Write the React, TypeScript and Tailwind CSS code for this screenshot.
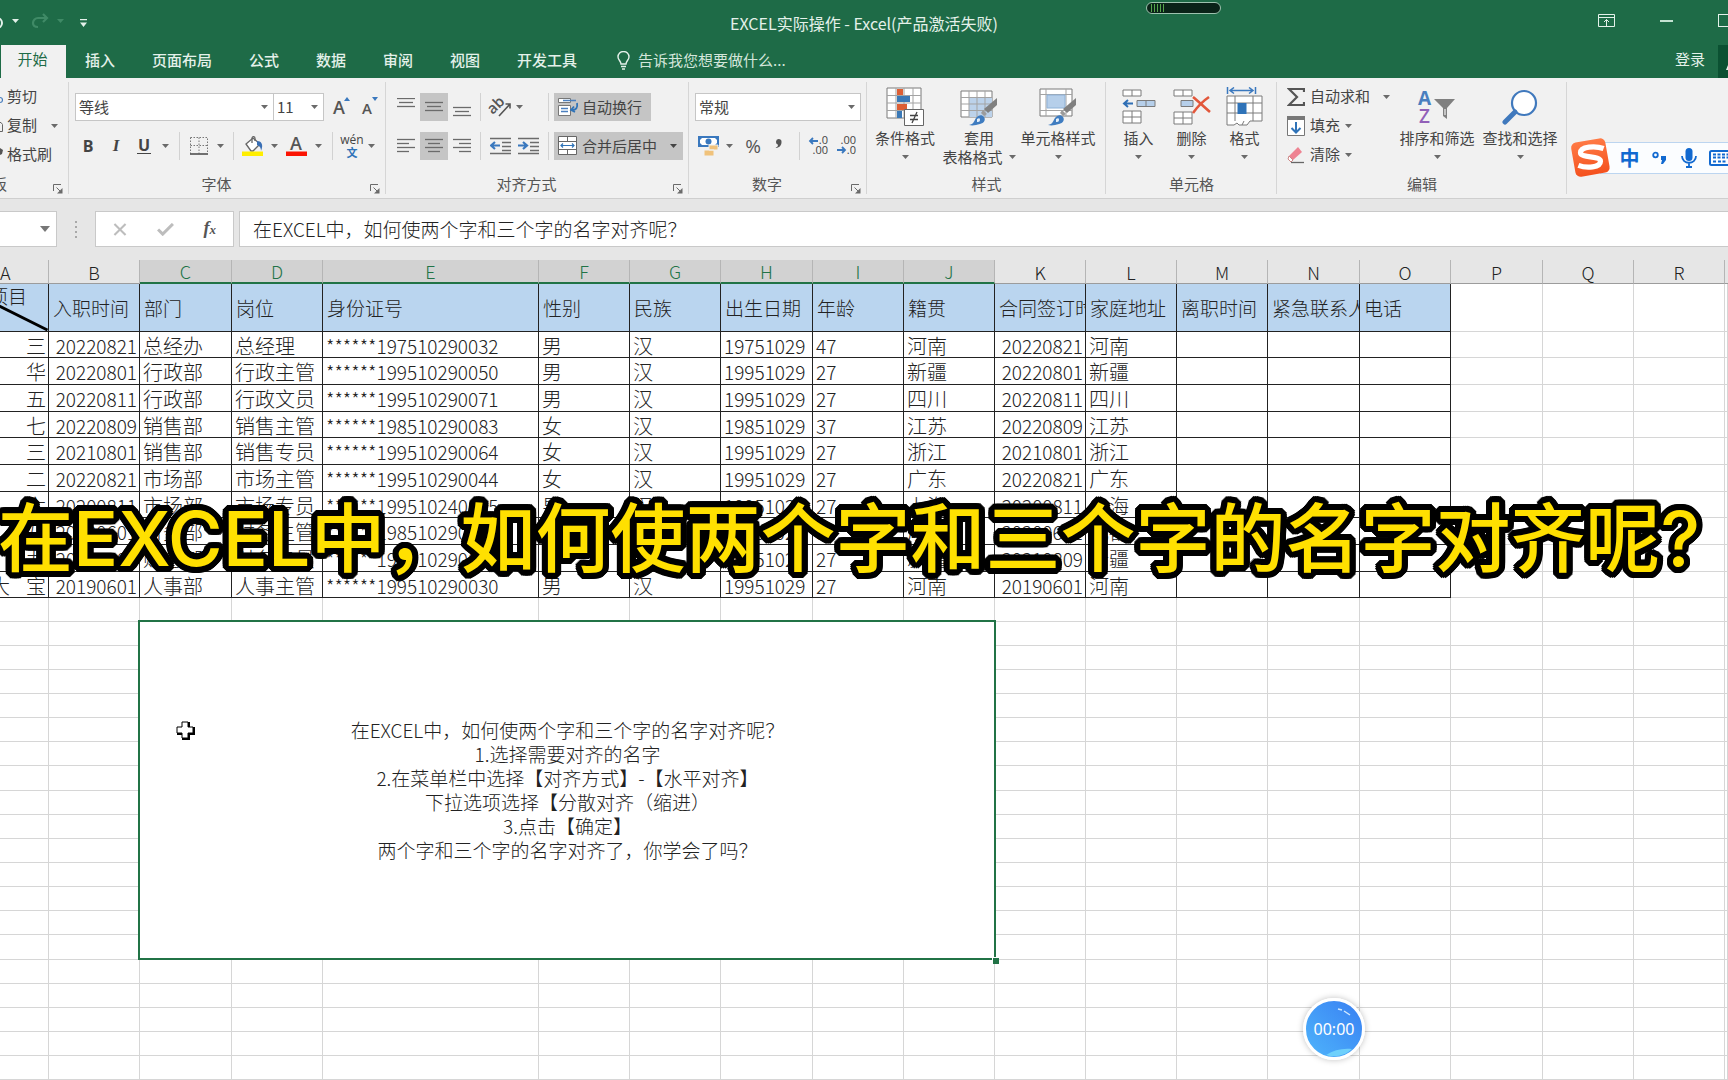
import React from "react";

const CJK = "font-['Noto_Sans_CJK_SC',sans-serif]";

/* ---------- small shared pieces ---------- */

function Caret({ className = "text-[#6a6a6a]" }: { className?: string }) {
  return (
    <svg width="7" height="4" viewBox="0 0 7 4" className={`shrink-0 ${className}`} aria-hidden="true">
      <path d="M0 0h7L3.5 4z" fill="currentColor" />
    </svg>
  );
}

function Divider() {
  return <span className="h-7 w-px shrink-0 bg-[#d2d2d2]" />;
}

function IconButton({
  label,
  className = "w-7",
  active = false,
  children,
}: {
  label: string;
  className?: string;
  active?: boolean;
  children: React.ReactNode;
}) {
  return (
    <button
      type="button"
      aria-label={label}
      className={`flex h-7 shrink-0 items-center justify-center ${className} ${active ? "bg-[#c5c5c5]" : ""}`}
    >
      {children}
    </button>
  );
}

function Group({
  title,
  className,
  titleClass = "text-center",
  launcher = false,
  children,
}: {
  title: string;
  className: string;
  titleClass?: string;
  launcher?: boolean;
  children: React.ReactNode;
}) {
  return (
    <section
      aria-label={title}
      className={`relative flex shrink-0 flex-col justify-between after:absolute after:top-1 after:right-0 after:bottom-1 after:w-px after:bg-[#d6d6d6] ${className}`}
    >
      {children}
      <div className={`pb-1 text-[15px] leading-5 whitespace-nowrap text-[#555] ${titleClass}`}>{title}</div>
      {launcher && (
        <button type="button" aria-label={`${title}设置`} className="absolute right-1.5 bottom-1">
          <svg width="10" height="10" viewBox="0 0 10 10" fill="none" stroke="#6a6a6a" aria-hidden="true">
            <path d="M.5 7V.5H8M3.5 3.5l4 4" />
            <path d="M9.5 4v5.5H4z" fill="#6a6a6a" stroke="none" />
          </svg>
        </button>
      )}
    </section>
  );
}

function BigButton({ lines, className, children }: { lines: string[]; className: string; children: React.ReactNode }) {
  return (
    <button type="button" className={`flex shrink-0 flex-col items-center whitespace-nowrap text-[15px] leading-[19px] text-[#444] ${className}`}>
      <span className="flex h-[42px] items-center">{children}</span>
      <span>{lines[0]}</span>
      <span className="flex h-[19px] items-center gap-1.5">
        {lines[1]}
        <Caret />
      </span>
    </button>
  );
}

/* ---------- alignment glyphs ---------- */

function Lines({ rows, h = 18 }: { rows: [number, number, number][]; h?: number }) {
  return (
    <svg width="18" height={h} viewBox={`0 0 18 ${h}`} stroke="#6b6b6b" strokeWidth="1.3" aria-hidden="true">
      {rows.map(([y, a, b]) => (
        <path key={y} d={`M${a} ${y}.5H${b}`} />
      ))}
    </svg>
  );
}

function IndentIcon({ flip = false }: { flip?: boolean }) {
  return (
    <svg width="22" height="18" viewBox="0 0 22 18" fill="none" stroke="#6b6b6b" strokeWidth="1.3" aria-hidden="true">
      <path d="M0 1.5h21M12 5.5h9M12 9.5h9M12 13.5h9M0 16.5h21" />
      <path
        d={flip ? "M0 8.5h8M5 5l4 3.500-4 3.500" : "M10 8.500H2M5 5L1 8.500 5 12"}
        stroke="#3a78be"
        strokeWidth="2.2"
      />
    </svg>
  );
}

/* ---------- ribbon pictures ---------- */

function BrushOverlay() {
  return (
    <g>
      <path d="M37 10v7L28 25l-4-4z" fill="#808080" />
      <path d="M23 22l4 4-3 2-3-3z" fill="#9b9b9b" />
      <path d="M9 37c5-1 5-4 7-7s6-4 8-1 0 6-4 7-7 2-11 1z" fill="#3f7cc0" />
      <path d="M17 31c2-1 3-1 3 1s-2 2-3 2z" fill="#e5f0fb" />
    </g>
  );
}

function CondFormatIcon() {
  return (
    <svg width="38" height="40" viewBox="0 0 38 40" aria-hidden="true">
      <path d="M1 1h34v30H1z" fill="#fff" stroke="#7a7a7a" />
      <path d="M1 8.500h34M1 16h34M1 23.500h34M10 1v30M18 1v30M27 1v30" stroke="#a3a3a3" fill="none" />
      <path d="M11 2h6v6h-6zM11 17h10v6H11z" fill="#dd5f35" />
      <path d="M11 9h13v6H11zM11 24h5v7h-5z" fill="#3b79b7" />
      <path d="M18.500 22.500h19v16h-19z" fill="#fff" stroke="#666" />
      <path d="M24 28.500h8M24 32.500h8M31 25l-5 11" stroke="#444" strokeWidth="1.3" />
    </svg>
  );
}

function TableFormatIcon() {
  return (
    <svg width="38" height="38" viewBox="0 0 38 38" aria-hidden="true">
      <path d="M1 3h31v26H1z" fill="#fff" stroke="#7a7a7a" />
      <path d="M9 10h23v19H9z" fill="#bcd2ea" />
      <path d="M1 9.500h31M1 16h31M1 22.500h31M9 3v26M17 3v26M25 3v26" stroke="#a3a3a3" fill="none" />
      <BrushOverlay />
    </svg>
  );
}

function CellStyleIcon() {
  return (
    <svg width="38" height="38" viewBox="0 0 38 38" aria-hidden="true">
      <path d="M1 1h32v27H1z" fill="#fff" stroke="#7a7a7a" />
      <path d="M1 6.500h32M1 22.500h32M7 1v27M27 1v27" stroke="#a3a3a3" fill="none" />
      <path d="M8 7h18v13H8z" fill="#b6cfea" stroke="#8fb2d8" />
      <BrushOverlay />
    </svg>
  );
}

function InsertCellsIcon() {
  return (
    <svg width="34" height="36" viewBox="0 0 34 36" fill="#fff" stroke="#7a7a7a" aria-hidden="true">
      <path d="M1 1h18v6H1zM10 1v6M1 22h18v12H1zM10 22v12M1 28h18" />
      <path d="M15 11.500h18v6H15zM24 11.500v6" fill="#b6cfea" />
      <path d="M11 14.500H3M6 11l-4 3.500L6 18" fill="none" stroke="#2f6fb5" strokeWidth="2" />
    </svg>
  );
}

function DeleteCellsIcon() {
  return (
    <svg width="38" height="36" viewBox="0 0 38 36" fill="#fff" stroke="#7a7a7a" aria-hidden="true">
      <path d="M1 1h18v6H1zM10 1v6M1 23h18v12H1zM10 23v12M1 29h18" />
      <path d="M8 11.500h12v6H8z" fill="#b6cfea" />
      <path d="M20 8c5 4 10 9 17 15M36 8c-6 4-11 9-16 16" fill="none" stroke="#e2573b" strokeWidth="2.600" />
    </svg>
  );
}

function FormatCellsIcon() {
  return (
    <svg width="38" height="40" viewBox="0 0 38 40" fill="#fff" stroke="#7a7a7a" aria-hidden="true">
      <path d="M1 9h35v25H24l-3 4H13l-2-2-3 2H1z" />
      <path d="M1 16h35M1 26h35M9 9v25M27 9v25M18 34l-2 4" />
      <path d="M11.500 16h9v11h-9z" fill="#2f73b8" stroke="none" />
      <path d="M1.500 0v7M29.500 0v7M4 3.500h23M8 .5L4 3.500l4 3M23 .5l4 3-4 3" fill="none" stroke="#3a78be" strokeWidth="1.500" />
    </svg>
  );
}

function SortFilterIcon() {
  return (
    <svg width="38" height="36" viewBox="0 0 38 36" className="overflow-visible" aria-hidden="true">
      <text x="0" y="16" fontSize="19" fontWeight="700" fill="#4a7fbf" fontFamily="Open Sans, sans-serif">A</text>
      <text x="1" y="34" fontSize="19" fontWeight="600" fill="#9160b8" fontFamily="Open Sans, sans-serif">Z</text>
      <path d="M16 10h21l-8 9v11l-4-3v-8z" fill="#808080" />
      <path d="M27 20v6" stroke="#ddd" strokeWidth="1.500" />
    </svg>
  );
}

function FindIcon() {
  return (
    <svg width="36" height="36" viewBox="0 0 36 36" aria-hidden="true">
      <circle cx="22" cy="14" r="12" fill="#fff" stroke="#4079bd" strokeWidth="2.200" />
      <path d="M13 23L3 33" stroke="#4079bd" strokeWidth="5" strokeLinecap="round" />
    </svg>
  );
}

/* ---------- title bar, tabs ---------- */

function TitleBar() {
  return (
    <header className="relative flex h-[45px] shrink-0 items-center justify-between bg-[#1e6b47] text-[#e4f1ea]">
      <div className="flex h-10 items-center pb-1">
        <button type="button" aria-label="撤消" className="flex w-3 justify-end overflow-hidden pr-2">
          <svg width="18" height="16" viewBox="0 0 18 16" fill="none" stroke="currentColor" strokeWidth="2" className="shrink-0" aria-hidden="true">
            <path d="M6 1L1 5l5 4M1 5h10a5 5 0 010 10H9" />
          </svg>
        </button>
        <Caret className="text-[#e4f1ea]" />
        <button type="button" aria-label="恢复" className="ml-3 flex items-center gap-2 text-[#3f8a66]">
          <svg width="18" height="16" viewBox="0 0 18 16" fill="none" stroke="currentColor" strokeWidth="2.200" aria-hidden="true">
            <path d="M12 1l4 4-4 4M16 5H7a5 5 0 00-5 5c0 3 2 4 5 4" />
          </svg>
          <Caret className="text-[#3f8a66]" />
        </button>
        <button type="button" aria-label="自定义快速访问工具栏" className="ml-4 pt-1">
          <svg width="7" height="8" viewBox="0 0 7 8" fill="currentColor" aria-hidden="true">
            <path d="M0 0h7v1.300H0zM0 3.500h7L3.500 8z" />
          </svg>
        </button>
      </div>
      <h1 className="absolute inset-x-0 top-3 text-center text-[16px] leading-[22px]">
        EXCEL实际操作 - Excel(产品激活失败)
      </h1>
      <div className="absolute top-0.5 left-[66.3%] flex h-3 w-[75px] items-center gap-0.5 rounded-md border border-[#9dc2ae] bg-[#0a2318] px-1">
        {[0, 1, 2, 3, 4].map((i) => (
          <span key={i} className="h-2 w-px bg-[#56a54c]" />
        ))}
      </div>
      <div className="flex h-[41px] items-center gap-[45px] overflow-hidden pb-1">
        <button type="button" aria-label="功能区显示选项">
          <svg width="17" height="13" viewBox="0 0 17 13" fill="none" stroke="currentColor" aria-hidden="true">
            <path d="M.5.5h16v12H.5zM.5 3.500h16M8.500 12V5.500M6 8l2.500-2.500L11 8" />
          </svg>
        </button>
        <button type="button" aria-label="最小化" className="h-0.5 w-[13px] bg-[#c4e2d2]" />
        <button type="button" aria-label="最大化" className="h-[13px] w-2.5 border border-r-0 border-[#e4f1ea]" />
      </div>
    </header>
  );
}

const TABS = ["插入", "页面布局", "公式", "数据", "审阅", "视图", "开发工具"];

function TabBar() {
  return (
    <nav className="flex h-[33px] shrink-0 items-center bg-[#1e6b47] text-[15px] text-[#e4f1ea]">
      <button type="button" className="ml-px h-full w-[65px] bg-[#f1f1f1] pr-0.5 pb-1 text-[#1e6b47]">开始</button>
      <div className="ml-[19px] flex gap-[37px] pb-1">
        {TABS.map((t) => (
          <button key={t} type="button" className="leading-5 font-medium whitespace-nowrap">
            {t}
          </button>
        ))}
      </div>
      <label className="ml-10 flex flex-1 items-center gap-2 pb-0.5">
        <svg width="13" height="19" viewBox="0 0 13 19" fill="none" stroke="currentColor" strokeWidth="1.400" aria-hidden="true">
          <path d="M4 13c0-3-3-4-3-7a5.500 5.500 0 0111 0c0 3-3 4-3 7zM4 15.500h5M5 18h3" />
        </svg>
        <input
          aria-label="告诉我您想要做什么"
          placeholder="告诉我您想要做什么..."
          className="w-60 bg-transparent text-[15px] outline-none placeholder:text-[#d3e6db]"
        />
      </label>
      <button type="button" className="mr-[13px] pb-1">登录</button>
      <button type="button" aria-label="共享" className="flex h-full w-2.5 items-center justify-end overflow-hidden bg-[#0b5132]">
        <svg width="3" height="16" viewBox="0 0 3 16" aria-hidden="true">
          <path d="M3 11L1 16h2z" fill="#e4f1ea" />
        </svg>
      </button>
    </nav>
  );
}

/* ---------- ribbon ---------- */

function ClipboardGroup() {
  return (
    <Group title="剪贴板" className="w-[69px] overflow-hidden" titleClass="flex w-[7px] justify-end" launcher>
      <div className="flex flex-col pt-1 text-[15px] text-[#444]">
        <button type="button" className="flex h-[29px] items-center gap-[4px] whitespace-nowrap">
          <svg width="3" height="16" viewBox="0 0 3 16" aria-hidden="true">
            <circle cx="0" cy="11" r="2.500" fill="none" stroke="#4a7fbf" strokeWidth="1.200" />
          </svg>
          剪切
        </button>
        <button type="button" className="flex h-[29px] items-center gap-[4px] whitespace-nowrap">
          <svg width="3" height="16" viewBox="0 0 3 16" fill="none" stroke="#666" aria-hidden="true">
            <path d="M0 4.500h1l1.500 2v7H0" />
          </svg>
          复制
          <span className="ml-2.5 flex">
            <Caret />
          </span>
        </button>
        <button type="button" className="flex h-[29px] items-center gap-[4px] whitespace-nowrap">
          <svg width="3" height="16" viewBox="0 0 3 16" aria-hidden="true">
            <path d="M0 1l3 2-1 4-2 1z" fill="#555" />
          </svg>
          格式刷
        </button>
      </div>
    </Group>
  );
}

function Dropdown({ label, value, className }: { label: string; value: string; className: string }) {
  return (
    <label className={`relative flex h-7 shrink-0 items-center border border-[#c6c6c6] bg-white ${className}`}>
      <select aria-label={label} defaultValue={value} className="h-full w-full appearance-none bg-transparent pl-[3px] text-[15px] text-[#444] outline-none">
        <option>{value}</option>
      </select>
      <span className="pointer-events-none absolute right-[5px] flex">
        <Caret />
      </span>
    </label>
  );
}

function FontGroup() {
  return (
    <Group title="字体" className="w-[317px]" titleClass="pr-[22px] text-center" launcher>
      <div className="flex flex-col gap-[11px] pt-[15px] pl-1.5 text-[#444]">
        <div className="flex items-center">
          <Dropdown label="字体" value="等线" className="w-[199px]" />
          <Dropdown label="字号" value="11" className="-ml-px w-[51px]" />
          <IconButton label="增大字号" className="ml-1.5 w-[22px]">
            <svg width="18" height="22" viewBox="0 0 18 22" className="overflow-visible" aria-hidden="true">
              <text x="1" y="18" fontSize="18" fontWeight="600" fill="#555" fontFamily="Open Sans, sans-serif">A</text>
              <path d="M12 5l3-4 3 4z" fill="#3a78be" />
            </svg>
          </IconButton>
          <IconButton label="减小字号" className="ml-1.5 w-[22px]">
            <svg width="17" height="22" viewBox="0 0 17 22" className="overflow-visible" aria-hidden="true">
              <text x="1" y="18" fontSize="15" fontWeight="600" fill="#555" fontFamily="Open Sans, sans-serif">A</text>
              <path d="M11 1h6l-3 4z" fill="#3a78be" />
            </svg>
          </IconButton>
        </div>
        <div className="flex items-center font-['Open_Sans',sans-serif] text-[16px]">
          <IconButton label="加粗" className="w-[26px]"><b>B</b></IconButton>
          <IconButton label="倾斜" className="w-[30px]">
            <i className="font-['Liberation_Serif',serif] text-[17px] font-bold">I</i>
          </IconButton>
          <IconButton label="下划线" className="w-[26px]">
            <b className="border-b border-[#444] px-px leading-[15px]">U</b>
          </IconButton>
          <IconButton label="下划线选项" className="w-4"><Caret /></IconButton>
          <span className="ml-1.5 flex"><Divider /></span>
          <IconButton label="边框" className="ml-1.5 w-[26px]">
            <svg width="18" height="18" viewBox="0 0 18 18" fill="none" stroke="#777" aria-hidden="true">
              <path d="M.5.5h17v16M.5.500v16M9 .5v16M.5 8.500h17" strokeDasharray="1.500 1.500" />
              <path d="M0 17h18" stroke="#444" strokeWidth="1.500" />
            </svg>
          </IconButton>
          <IconButton label="边框选项" className="w-4"><Caret /></IconButton>
          <span className="ml-[5px] flex"><Divider /></span>
          <IconButton label="填充颜色" className="ml-1.5 w-[26px]">
            <svg width="22" height="20" viewBox="0 0 22 20" aria-hidden="true">
              <path d="M4 8l7-6 7 6-7 7H9z" fill="#fff" stroke="#666" strokeWidth="1.300" />
              <path d="M10 7V2.500c0-2.500 3-2.500 3 0V5" fill="none" stroke="#666" strokeWidth="1.300" />
              <path d="M15 5c4 0 7 3 4 10 0-3-1-5-4-6z" fill="#3a6fb5" />
              <path d="M0 15.500h21v4.500H0z" fill="#ffee00" />
            </svg>
          </IconButton>
          <IconButton label="填充颜色选项" className="w-4"><Caret /></IconButton>
          <IconButton label="字体颜色" className="w-[28px]">
            <svg width="21" height="20" viewBox="0 0 21 20" className="overflow-visible" aria-hidden="true">
              <text x="4" y="14" fontSize="18" fontWeight="600" fill="#555" fontFamily="Open Sans, sans-serif">A</text>
              <path d="M0 15.500h21v4.500H0z" fill="#fb1403" />
            </svg>
          </IconButton>
          <IconButton label="字体颜色选项" className="w-4"><Caret /></IconButton>
          <span className="ml-1.5 flex"><Divider /></span>
          <button type="button" aria-label="拼音" className="ml-2 flex h-7 w-[22px] flex-col items-center justify-center">
            <span className="text-[12px] leading-[12px]">wén</span>
            <span className="font-['Noto_Sans_CJK_SC',sans-serif] text-[11px] leading-[12px] font-bold text-[#2f73b8]">文</span>
          </button>
          <IconButton label="拼音选项" className="w-4"><Caret /></IconButton>
        </div>
      </div>
    </Group>
  );
}

function AlignGroup() {
  return (
    <Group title="对齐方式" className="w-[303px]" titleClass="pr-[22px] text-center" launcher>
      <div className="flex flex-col gap-[11px] pt-[15px] pl-1.5 text-[15px] text-[#444]">
        <div className="flex items-center">
          <IconButton label="顶端对齐"><Lines rows={[[0, 0, 18], [4, 2, 16], [8, 0, 18]]} /></IconButton>
          <IconButton label="垂直居中" active><Lines rows={[[4, 0, 18], [8, 2, 16], [12, 0, 18]]} /></IconButton>
          <IconButton label="底端对齐"><Lines rows={[[10, 0, 18], [14, 2, 16], [18, 0, 18]]} h={20} /></IconButton>
          <span className="ml-1 flex"><Divider /></span>
          <IconButton label="方向" className="ml-2 w-[24px]">
            <svg width="22" height="22" viewBox="0 0 22 22" className="overflow-visible" aria-hidden="true">
              <text x="-1" y="14" fontSize="15" fontWeight="600" fill="#555" fontFamily="Open Sans, sans-serif" transform="rotate(-45 7 12)">ab</text>
              <path d="M9 20L20 8M15.500 8H20v4.500" fill="none" stroke="#555" strokeWidth="1.600" />
            </svg>
          </IconButton>
          <IconButton label="方向选项" className="w-3"><Caret /></IconButton>
          <span className="ml-[23px] flex"><Divider /></span>
          <button type="button" className="ml-[5px] flex h-7 w-[97px] shrink-0 items-center gap-[3px] bg-[#c5c5c5] pl-1 whitespace-nowrap">
            <svg width="21" height="20" viewBox="0 0 21 20" fill="none" aria-hidden="true">
              <path d="M.5 1.500h12v4H.5zM.5 8.500h12v10H.5z" fill="#fff" stroke="#777" />
              <path d="M3 11.500h7M3 14.500h7M5 3.500h13" stroke="#4a7fbf" strokeWidth="1.500" />
              <path d="M19 6c1 5-1 7-5 7M16 9.500L13 13l4 2" stroke="#2f73b8" strokeWidth="1.800" />
            </svg>
            自动换行
          </button>
        </div>
        <div className="flex items-center">
          <IconButton label="左对齐"><Lines rows={[[2, 0, 18], [6, 0, 12], [10, 0, 18], [14, 0, 12]]} /></IconButton>
          <IconButton label="居中" active><Lines rows={[[2, 0, 18], [6, 3, 15], [10, 0, 18], [14, 3, 15]]} /></IconButton>
          <IconButton label="右对齐"><Lines rows={[[2, 0, 18], [6, 6, 18], [10, 0, 18], [14, 6, 18]]} /></IconButton>
          <span className="ml-1 flex"><Divider /></span>
          <IconButton label="减少缩进量" className="ml-1.5 w-[28px]"><IndentIcon /></IconButton>
          <IconButton label="增加缩进量" className="w-[28px]"><IndentIcon flip /></IconButton>
          <span className="ml-[5px] flex"><Divider /></span>
          <button type="button" className="ml-[5px] flex h-7 w-[129px] shrink-0 items-center gap-[5px] bg-[#c5c5c5] pl-1 whitespace-nowrap">
            <svg width="19" height="20" viewBox="0 0 19 20" fill="#fff" stroke="#666" aria-hidden="true">
              <path d="M.5.500h18v18H.5zM.5 5.500h18M.5 13.500h18M9.500.5v5M9.500 13.500v5" />
              <path d="M3 9.500h13M5 7.500l-2 2 2 2M14 7.500l2 2-2 2" fill="none" stroke="#2f73b8" strokeWidth="1.200" />
            </svg>
            合并后居中
            <span className="ml-2 flex"><Caret className="text-[#444]" /></span>
          </button>
        </div>
      </div>
    </Group>
  );
}

function DecimalIcon({ add }: { add: boolean }) {
  return (
    <svg width="20" height="20" viewBox="0 0 20 20" className="overflow-visible" aria-hidden="true">
      <g fontSize="11" fill="#444" fontFamily="Open Sans, sans-serif" textAnchor="end">
        <text x="19" y="8">{add ? ".0" : ".00"}</text>
        <text x="19" y="18">{add ? ".00" : ".0"}</text>
      </g>
      <path d={add ? "M9 5H2M4 2L1 5l3 3" : "M0 14h8M5 11l3 3-3 3"} fill="none" stroke="#3a78be" strokeWidth="1.800" />
    </svg>
  );
}

function NumberGroup() {
  return (
    <Group title="数字" className="w-[178px]" titleClass="pr-[22px] text-center" launcher>
      <div className="flex flex-col gap-[11px] pt-[15px] pl-1.5 text-[#444]">
        <Dropdown label="数字格式" value="常规" className="w-[166px]" />
        <div className="flex items-center">
          <IconButton label="会计数字格式" className="w-[28px]">
            <svg width="22" height="22" viewBox="0 0 22 22" aria-hidden="true">
              <path d="M0 1h21v11H0z" fill="#3a78be" />
              <path d="M2 5l2-2h13l2 2v3l-2 2H4L2 8z" fill="#fff" />
              <circle cx="10.500" cy="6.500" r="3" fill="#3a78be" />
              <path d="M11 10h9v5h-9zM6 15h10v6H6z" fill="#f0c27b" stroke="#f1f1f1" />
            </svg>
          </IconButton>
          <IconButton label="会计格式选项" className="w-3"><Caret /></IconButton>
          <IconButton label="百分比样式" className="ml-1.5 w-[24px]">
            <span className="font-['Open_Sans',sans-serif] text-[19px] font-medium text-[#555]">%</span>
          </IconButton>
          <IconButton label="千位分隔样式" className="ml-0.5 w-[22px] pb-1">
            <svg width="7" height="10" viewBox="0 0 7 10" aria-hidden="true">
              <path d="M3.500 0a3 3 0 00-.5 5.800c0 1.500-1 2.500-2.500 3.200C4 9 6.500 6.500 6.500 3.200A3 3 0 003.500 0z" fill="#555" />
            </svg>
          </IconButton>
          <span className="ml-2.5 flex"><Divider /></span>
          <IconButton label="增加小数位数" className="ml-[5px] w-7"><DecimalIcon add /></IconButton>
          <IconButton label="减少小数位数" className="w-7"><DecimalIcon add={false} /></IconButton>
        </div>
      </div>
    </Group>
  );
}

function EditGroup() {
  return (
    <Group title="编辑" className="w-[290px]">
      <div className="flex pt-1 text-[15px] text-[#444]">
        <div className="flex w-[115px] shrink-0 flex-col pl-2.5">
          <button type="button" className="flex h-[29px] items-center gap-[5px] whitespace-nowrap">
            <svg width="18" height="20" viewBox="0 0 18 20" fill="none" stroke="#555" strokeWidth="2.200" aria-hidden="true">
              <path d="M17 5V2H2l8 8-8 8h15v-3" />
            </svg>
            自动求和
            <span className="ml-2 flex"><Caret /></span>
          </button>
          <button type="button" className="flex h-[29px] items-center gap-[5px] whitespace-nowrap">
            <svg width="18" height="20" viewBox="0 0 18 20" fill="none" aria-hidden="true">
              <path d="M.5.500h17v19H.5z" fill="#fff" stroke="#777" />
              <path d="M0 0h18v4H0z" fill="#777" />
              <path d="M9 6v10M4.500 12L9 16.500l4.500-4.500" stroke="#2f73b8" strokeWidth="2" />
            </svg>
            填充
            <Caret />
          </button>
          <button type="button" className="flex h-[29px] items-center gap-[5px] whitespace-nowrap">
            <svg width="18" height="18" viewBox="0 0 18 18" aria-hidden="true">
              <path d="M2 10L11 1l4 5-9 8z" fill="#ee8392" />
              <path d="M2 10l4 4-2 2-3-3z" fill="#fff" stroke="#c88" />
              <path d="M4 16.500h13" stroke="#666" strokeWidth="1.300" />
            </svg>
            清除
            <Caret />
          </button>
        </div>
        <BigButton lines={["排序和筛选", ""]} className="w-[90px] pt-1"><SortFilterIcon /></BigButton>
        <BigButton lines={["查找和选择", ""]} className="w-[76px] pt-1"><FindIcon /></BigButton>
      </div>
    </Group>
  );
}

function InputMethodBar() {
  return (
    <div className="absolute top-[62px] right-0 flex h-9 w-[158px] items-center">
      <svg width="42" height="42" viewBox="0 0 40 40" className="absolute left-0 z-10" aria-hidden="true">
        <defs>
          <linearGradient id="imeLogo" x1="0" y1="0" x2="0" y2="1">
            <stop offset="0" stopColor="#ff7a45" />
            <stop offset="1" stopColor="#f4511e" />
          </linearGradient>
        </defs>
        <rect x="3" y="3" width="33" height="33" rx="5" fill="url(#imeLogo)" transform="rotate(-10 20 20)" />
        <path d="M32 11C24 8 10 9 10 15c0 5 19 3 19 8 0 6-13 7-21 4" fill="none" stroke="#fff" strokeWidth="5" />
      </svg>
      <div className="ml-[30px] flex h-8 flex-1 items-center overflow-hidden border-y border-[#bcd5f0] bg-[#fbfdff] pl-[18px] text-[#1169d0]">
        <button type="button" className="w-[23px] shrink-0 text-[20px] leading-8 font-bold">中</button>
        <button type="button" aria-label="标点" className="ml-2 flex w-[20px] shrink-0 justify-center">
          <svg width="15" height="14" viewBox="0 0 15 14" aria-hidden="true">
            <circle cx="3.500" cy="4" r="2.300" fill="none" stroke="currentColor" strokeWidth="1.800" />
            <path d="M9 5h5v4l-3 4H9l1-4H9z" fill="currentColor" />
          </svg>
        </button>
        <button type="button" aria-label="语音" className="ml-2.5 flex w-[20px] shrink-0 justify-center">
          <svg width="16" height="20" viewBox="0 0 16 20" fill="none" stroke="currentColor" strokeWidth="1.800" aria-hidden="true">
            <rect x="4.500" y="0" width="7" height="13" rx="3.500" fill="currentColor" stroke="none" />
            <path d="M1 8c0 9 14 9 14 0M8 15v3M5 19h6" />
          </svg>
        </button>
        <button type="button" aria-label="键盘" className="ml-2.5 shrink-0">
          <svg width="26" height="16" viewBox="0 0 26 16" aria-hidden="true">
            <rect x="1" y="1" width="24" height="14" rx="1.500" fill="none" stroke="currentColor" strokeWidth="2" />
            <path d="M4 4.500h18M4 7.500h18M4 11.500h3M9 11.500h8" stroke="currentColor" strokeWidth="2" strokeDasharray="3 1.500" />
          </svg>
        </button>
      </div>
    </div>
  );
}

function Ribbon() {
  return (
    <div className="relative flex h-[121px] shrink-0 overflow-hidden border-b border-[#cfcfcf] bg-[#f1f1f1]">
      <ClipboardGroup />
      <FontGroup />
      <AlignGroup />
      <NumberGroup />
      <Group title="样式" className="w-[239px]">
        <div className="flex pt-2">
          <BigButton lines={["条件格式", ""]} className="w-[76px]"><CondFormatIcon /></BigButton>
          <BigButton lines={["套用", "表格格式"]} className="w-[72px]"><TableFormatIcon /></BigButton>
          <BigButton lines={["单元格样式", ""]} className="w-[86px]"><CellStyleIcon /></BigButton>
        </div>
      </Group>
      <Group title="单元格" className="w-[171px]">
        <div className="flex pt-2 pl-[6px]">
          <BigButton lines={["插入", ""]} className="w-[53px]"><InsertCellsIcon /></BigButton>
          <BigButton lines={["删除", ""]} className="w-[53px]"><DeleteCellsIcon /></BigButton>
          <BigButton lines={["格式", ""]} className="w-[53px]"><FormatCellsIcon /></BigButton>
        </div>
      </Group>
      <EditGroup />
      <InputMethodBar />
    </div>
  );
}

/* ---------- formula bar ---------- */

function FormulaBar() {
  return (
    <div className="flex h-[61px] shrink-0 items-start bg-[#e6e6e6] pt-3">
      <button type="button" aria-label="名称框" className="flex h-9 w-[57px] shrink-0 items-center justify-end border border-l-0 border-[#c9c9c9] bg-white pr-1.5">
        <svg width="10" height="6" viewBox="0 0 10 6" aria-hidden="true"><path d="M0 0h10L5 6z" fill="#777" /></svg>
      </button>
      <span className="flex h-9 w-[38px] shrink-0 flex-col items-center justify-center gap-[3px]">
        {[0, 1, 2, 3].map((i) => (
          <span key={i} className="size-0.5 bg-[#a8a8a8]" />
        ))}
      </span>
      <div className="flex h-9 w-[139px] shrink-0 items-center justify-around border border-[#c9c9c9] bg-white px-0.5">
        <button type="button" aria-label="取消">
          <svg width="14" height="13" viewBox="0 0 14 14" stroke="#bdbdbd" strokeWidth="2.200" aria-hidden="true"><path d="M1 1l12 12M13 1L1 13" /></svg>
        </button>
        <button type="button" aria-label="输入">
          <svg width="17" height="13" viewBox="0 0 18 14" fill="none" stroke="#bdbdbd" strokeWidth="3.200" aria-hidden="true"><path d="M1 7l5 5L17 1" /></svg>
        </button>
        <button type="button" aria-label="插入函数" className="font-['Liberation_Serif',serif] text-[18px] leading-5 font-bold text-[#555] italic">
          f<span className="text-[13px]">x</span>
        </button>
      </div>
      <input
        aria-label="编辑栏"
        defaultValue="在EXCEL中，如何使两个字和三个字的名字对齐呢？"
        className="ml-[5px] h-9 min-w-0 flex-1 border border-r-0 border-[#c9c9c9] bg-white pb-0.5 pl-[13px] text-[19px] font-light text-[#222] outline-none"
      />
    </div>
  );
}

/* ---------- worksheet ---------- */

const COLS: [string, string][] = [
  ["A", "w-[49px]"], ["B", "w-[91px]"], ["C", "w-[92px]"], ["D", "w-[91px]"], ["E", "w-[216px]"],
  ["F", "w-[91px]"], ["G", "w-[91px]"], ["H", "w-[92px]"], ["I", "w-[91px]"], ["J", "w-[91px]"],
  ["K", "w-[91px]"], ["L", "w-[91px]"], ["M", "w-[91px]"], ["N", "w-[92px]"], ["O", "w-[91px]"],
  ["P", "w-[92px]"], ["Q", "w-[91px]"], ["R", "w-[91px]"],
];

const HEADERS = ["入职时间", "部门", "岗位", "身份证号", "性别", "民族", "出生日期", "年龄", "籍贯", "合同签订时间", "家庭地址", "离职时间", "紧急联系人", "电话"];

const ROWS: string[][] = [
  ["三", "20220821", "总经办", "总经理", "******197510290032", "男", "汉", "19751029", "47", "河南", "20220821", "河南"],
  ["华", "20220801", "行政部", "行政主管", "******199510290050", "男", "汉", "19951029", "27", "新疆", "20220801", "新疆"],
  ["五", "20220811", "行政部", "行政文员", "******199510290071", "男", "汉", "19951029", "27", "四川", "20220811", "四川"],
  ["七", "20220809", "销售部", "销售主管", "******198510290083", "女", "汉", "19851029", "37", "江苏", "20220809", "江苏"],
  ["三", "20210801", "销售部", "销售专员", "******199510290064", "女", "汉", "19951029", "27", "浙江", "20210801", "浙江"],
  ["二", "20220821", "市场部", "市场主管", "******199510290044", "女", "汉", "19951029", "27", "广东", "20220821", "广东"],
  ["六", "20200811", "市场部", "市场专员", "******199510240065", "男", "汉", "19951024", "27", "上海", "20200811", "上海"],
  ["八", "20200601", "财务部", "财务主管", "******198510290022", "男", "汉", "19851029", "37", "成都", "20200601", "成都"],
  ["九", "20210809", "财务部", "财务专员", "******199510290018", "男", "汉", "19951029", "27", "新疆", "20210809", "新疆"],
  ["大 宝", "20190601", "人事部", "人事主管", "******199510290030", "男", "汉", "19951029", "27", "河南", "20190601", "河南"],
];

const NOTE = [
  "在EXCEL中，如何使两个字和三个字的名字对齐呢？",
  "1.选择需要对齐的名字",
  "2.在菜单栏中选择【对齐方式】-【水平对齐】",
  "下拉选项选择【分散对齐（缩进）",
  "3.点击【确定】",
  "两个字和三个字的名字对齐了，你学会了吗？",
];

const range = (n: number) => Array.from({ length: n }, (_, i) => i);

function EmptyCells({ count }: { count: number }) {
  return (
    <>
      {range(count).map((i) => (
        <td key={i} className="border-r border-b border-[#d6d6d6] p-0" />
      ))}
    </>
  );
}

function Sheet() {
  return (
    <main className="flex-1 overflow-hidden bg-white">
      <table className="w-full table-fixed border-separate border-spacing-0 whitespace-nowrap text-[#222]">
        <colgroup>
          {COLS.map(([c, w]) => (
            <col key={c} className={w} />
          ))}
          <col />
        </colgroup>
        <thead>
          <tr className="h-6">
            {COLS.map(([c], i) => {
              const selected = i >= 2 && i <= 9;
              return (
                <th
                  key={c}
                  scope="col"
                  className={`h-6 overflow-hidden border-r border-r-[#b5b5b5] p-0 text-[18px] leading-[22px] font-light ${
                    selected
                      ? "border-b-2 border-b-[#217346] bg-[#d2d2d2] text-[#217346]"
                      : "border-b border-b-[#9c9c9c] bg-[#e6e6e6] text-[#222]"
                  }`}
                >
                  {i === 0 ? <span className="block pr-10">A</span> : c}
                </th>
              );
            })}
            <th className="border-b border-[#9c9c9c] bg-[#e6e6e6] p-0" />
          </tr>
        </thead>
        <tbody>
          <tr className="h-12 text-[19px] leading-6">
            <td className="relative h-12 overflow-hidden border-r border-b border-[#222] bg-[#bad5ef] p-0 align-top">
              <div className="flex justify-end pr-[21px] leading-6 font-light">项目</div>
              <svg viewBox="0 0 48 48" className="absolute inset-0 h-full w-full" aria-hidden="true">
                <path d="M-4 21L48 47" stroke="#000" strokeWidth="3" />
              </svg>
            </td>
            {HEADERS.map((h) => (
              <td key={h} className="overflow-hidden border-r border-b border-[#222] bg-[#bad5ef] p-0 pl-1 font-light text-[#222]">
                {h}
              </td>
            ))}
            <EmptyCells count={4} />
          </tr>
          {ROWS.map((row, r) => (
            <tr key={r} className={`text-[20px] leading-[22px] font-light ${r % 3 === 0 ? "h-[26px]" : "h-[27px]"}`}>
              {range(15).map((c) => {
                const v = row[c] ?? "";
                const numeric = [1, 4, 7, 8, 10].includes(c);
                return (
                  <td
                    key={c}
                    className={`overflow-hidden border-r border-b border-[#222] p-0 pt-0.5 ${
                      c === 0 ? "pr-0.5" : c === 1 || c === 10 ? "pr-0.5 text-right" : "pl-[3px]"
                    } ${numeric ? "text-[19px]" : ""}`}
                  >
                    {c === 0 ? (
                      <div className="flex justify-end gap-4 overflow-hidden">
                        {v.split(" ").map((ch) => (
                          <span key={ch}>{ch}</span>
                        ))}
                      </div>
                    ) : (
                      v
                    )}
                  </td>
                );
              })}
              <EmptyCells count={4} />
            </tr>
          ))}
          <tr className="h-6">
            <EmptyCells count={19} />
          </tr>
          {range(14).map((r) => (
            <tr key={r} className={r % 7 === 6 ? "h-[25px]" : "h-6"}>
              <EmptyCells count={2} />
              {r === 0 && (
                <td colSpan={8} rowSpan={14} className="relative bg-white p-0 pb-0.5 text-center text-[19px] leading-6 font-light">
                  {NOTE.map((line) => (
                    <p key={line}>{line}</p>
                  ))}
                  <div className="pointer-events-none absolute -top-0.5 -right-px bottom-0 -left-0.5 border-2 border-[#217346]" />
                  <span className="absolute -right-1 -bottom-1 size-[7px] border-t border-l border-white bg-[#217346]" />
                  <svg width="19" height="19" viewBox="0 0 19 19" className="absolute top-[99px] left-[36px]" aria-hidden="true">
                    <path d="M7 2h6v5h5v6h-5v5H7v-5H2V7h5z" fill="#000" stroke="#000" strokeWidth="2" />
                    <path d="M6 1h6v5h5v6h-5v5H6v-5H1V6h5z" fill="#fff" stroke="#000" />
                  </svg>
                </td>
              )}
              <EmptyCells count={9} />
            </tr>
          ))}
          {range(6).map((r) => (
            <tr key={r} className="h-6">
              <EmptyCells count={19} />
            </tr>
          ))}
        </tbody>
      </table>
    </main>
  );
}

/* ---------- overlays ---------- */

/* The outline is a ring of hard shadows, which keeps the corners round. */
function Caption() {
  return (
    <p className="pointer-events-none absolute top-[485px] -left-0.5 font-['Inter','Noto_Sans_CJK_SC',sans-serif] text-[75px] leading-[108px] font-medium whitespace-nowrap text-[#ffe000] [text-shadow:6px_0_#000,-6px_0_#000,0_6px_#000,0_-6px_#000,6px_2px_#000,6px_-2px_#000,-6px_2px_#000,-6px_-2px_#000,2px_6px_#000,2px_-6px_#000,-2px_6px_#000,-2px_-6px_#000,4px_4px_#000,4px_-4px_#000,-4px_4px_#000,-4px_-4px_#000,5px_3px_#000,5px_-3px_#000,-5px_3px_#000,-5px_-3px_#000,3px_5px_#000,3px_-5px_#000,-3px_5px_#000,-3px_-5px_#000,3px_0_#000,-3px_0_#000,0_3px_#000,0_-3px_#000]">
      在EXCEL中，如何使两个字和三个字的名字对齐呢?
    </p>
  );
}

function RecorderBubble() {
  return (
    <button
      type="button"
      className="absolute right-[363px] bottom-5 flex size-[62px] items-center justify-center overflow-hidden rounded-full border-[3px] border-white bg-linear-to-tr from-[#4fb4fb] to-[#3a7ff2] font-['Noto_Sans',sans-serif] text-[16px] text-white shadow-[0_0_6px_rgba(0,0,0,0.25)]"
    >
      <svg viewBox="0 0 56 56" className="absolute inset-0 h-full w-full" aria-hidden="true">
        <path d="M20 54c8-5 16-7 26-6-6 6-16 9-26 6z" fill="#6fd0fb" />
        <path d="M32 8l4 1M38 10l6 4" stroke="#cfe8ff" strokeWidth="1.500" />
      </svg>
      <span className="relative">00:00</span>
    </button>
  );
}

export default function App() {
  return (
    <div className={`relative flex h-screen flex-col overflow-hidden bg-[#e6e6e6] ${CJK}`}>
      <TitleBar />
      <TabBar />
      <Ribbon />
      <FormulaBar />
      <Sheet />
      <Caption />
      <RecorderBubble />
    </div>
  );
}
